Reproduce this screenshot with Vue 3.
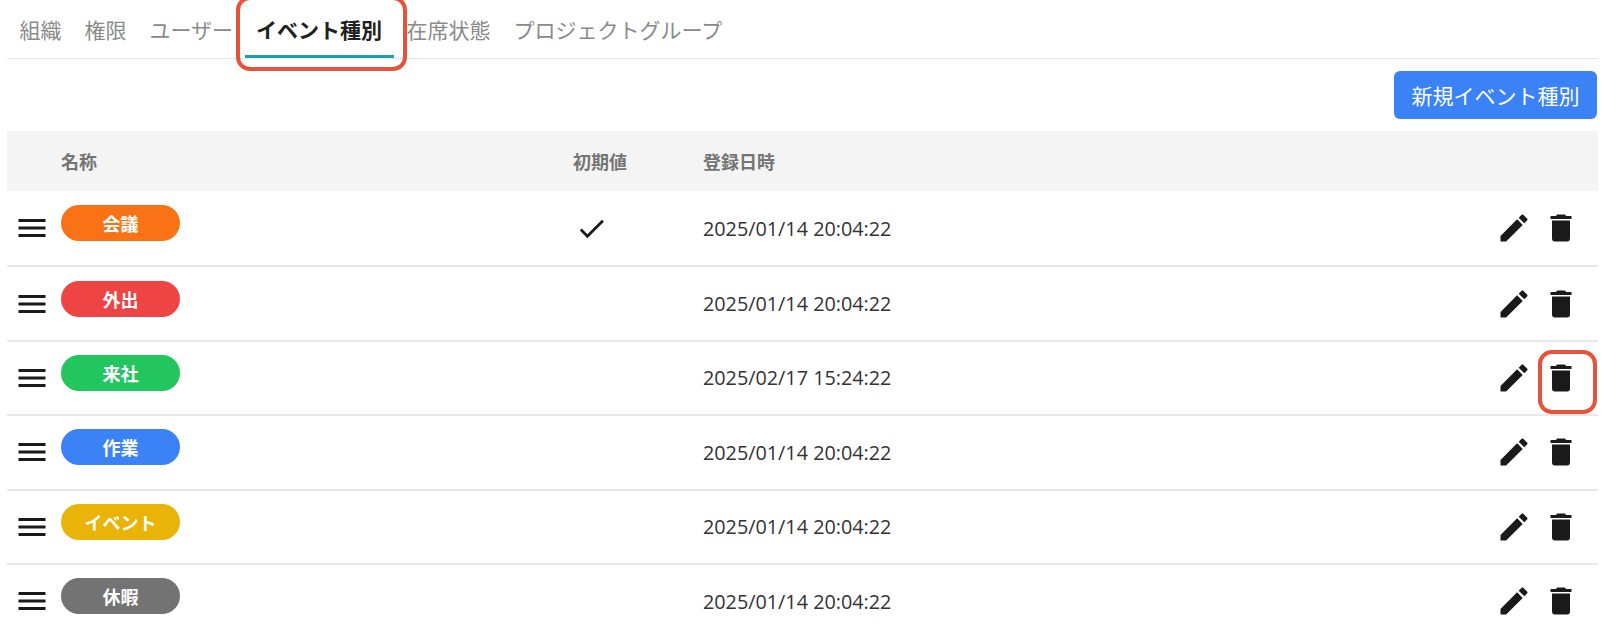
<template>
  <div class="page">
    <!-- Tabs -->
    <div class="tabs">
      <div
        v-for="tab in tabs"
        :key="tab"
        class="tab"
        :class="{ active: tab === activeTab }"
      >
        {{ tab }}
      </div>
      <div class="mark mark-tab"></div>
    </div>

    <div class="toolbar">
      <button class="add-btn">新規イベント種別</button>
    </div>

    <!-- List -->
    <div class="list">
      <div class="row head">
        <div></div>
        <div>名称</div>
        <div>初期値</div>
        <div>登録日時</div>
        <div></div>
      </div>
      <div v-for="item in items" :key="item.name" class="row item">
        <svg class="icon handle" viewBox="0 0 24 24"><path :d="icons.menu" /></svg>
        <div class="name-cell">
          <span class="badge" :style="{ backgroundColor: item.color }">{{ item.name }}</span>
        </div>
        <div>
          <svg v-if="item.isDefault" class="icon check" viewBox="0 0 24 24"><path :d="icons.check" /></svg>
        </div>
        <div class="date">{{ item.date }}</div>
        <div class="actions">
          <svg class="icon" viewBox="0 0 24 24"><path :d="icons.pencil" /></svg>
          <div class="delete">
            <svg class="icon" viewBox="0 0 24 24"><path :d="icons.trash" /></svg>
            <div v-if="item.marked" class="mark mark-delete"></div>
          </div>
        </div>
      </div>
    </div>
  </div>
</template>

<script setup>
const tabs = ["組織", "権限", "ユーザー", "イベント種別", "在席状態", "プロジェクトグループ"];
const activeTab = "イベント種別";

const items = [
  { name: "会議", color: "#f97316", date: "2025/01/14 20:04:22", isDefault: true },
  { name: "外出", color: "#ef4444", date: "2025/01/14 20:04:22" },
  { name: "来社", color: "#22c55e", date: "2025/02/17 15:24:22", marked: true },
  { name: "作業", color: "#3b82f6", date: "2025/01/14 20:04:22" },
  { name: "イベント", color: "#eab308", date: "2025/01/14 20:04:22" },
  { name: "休暇", color: "#737373", date: "2025/01/14 20:04:22" },
];

const icons = {
  menu: "M3,6H21V8H3V6M3,11H21V13H3V11M3,16H21V18H3V16Z",
  check: "M21,7L9,19L3.5,13.5L4.91,12.09L9,16.17L19.59,5.59L21,7Z",
  pencil:
    "M20.71,7.04C21.1,6.65 21.1,6 20.71,5.63L18.37,3.29C18,2.9 17.35,2.9 16.96,3.29L15.12,5.12L18.87,8.87M3,17.25V21H6.75L17.81,9.93L14.06,6.18L3,17.25Z",
  trash:
    "M19,4H15.5L14.5,3H9.5L8.5,4H5V6H19M6,19A2,2 0 0,0 8,21H16A2,2 0 0,0 18,19V7H6V19Z",
};
</script>

<style>
html,
body {
  overflow: hidden;
  background: #fff;
}
</style>

<style scoped>
.page {
  width: 1591px;
  margin-left: 7px;
  font-family: "Noto Sans CJK JP", "Open Sans", sans-serif;
  color: #212121;
}

/* Tabs */
.tabs {
  position: relative;
  display: flex;
  height: 59px;
  box-sizing: border-box;
  padding-left: 1px;
  border-bottom: 1px solid #e5e5e5;
}

.tab {
  height: 58px;
  padding: 0 11.5px;
  font-size: 21px;
  line-height: 58px;
  color: #8a8a8a;
  white-space: nowrap;
}

.tab.active {
  color: #212121;
  font-weight: 700;
  height: 58px;
  margin-right: 1.5px;
  border-bottom: 3px solid #1a9fb5;
  box-sizing: border-box;
}

.mark {
  position: absolute;
  box-sizing: border-box;
  border: 4px solid #e5533d;
  border-radius: 14px;
}

.mark-tab {
  left: 229px;
  top: -4px;
  width: 171px;
  height: 75px;
}

/* Toolbar */
.toolbar {
  display: flex;
  justify-content: flex-end;
  padding: 12px 1px 12px 0;
}

.add-btn {
  width: 203px;
  height: 48px;
  padding: 0;
  border: none;
  border-radius: 6px;
  background: #3b82f6;
  color: #fff;
  font-family: inherit;
  font-size: 21px;
}

/* List */
.row {
  display: grid;
  grid-template-columns: 54px 512px 130px 1fr auto;
  align-items: center;
  height: 74.4px;
  box-sizing: border-box;
}

.row.head {
  height: 60px;
  background: #f4f4f4;
  font-size: 18px;
  font-weight: 700;
  color: #757575;
}

.item + .item {
  border-top: 2px solid #e8e8e8;
}

.icon {
  display: block;
  width: 36px;
  height: 36px;
  fill: #1a1a1a;
}

.check {
  width: 33px;
  height: 33px;
  margin-left: 1.5px;
}

.handle {
  margin-left: 6.5px;
}

.name-cell {
  display: flex;
  margin-top: -10px;
}

.badge {
  width: 119px;
  height: 36px;
  border-radius: 18px;
  color: #fff;
  font-size: 18px;
  font-weight: 700;
  line-height: 36px;
  text-align: center;
}

.date {
  font-family: "Open Sans", "Noto Sans CJK JP", sans-serif;
  font-size: 19.8px;
  color: #333;
}

.actions {
  display: flex;
  gap: 11.5px;
  padding-right: 19px;
}

.delete {
  position: relative;
}

.mark-delete {
  left: -5px;
  top: -10px;
  width: 59px;
  height: 64px;
}
</style>
